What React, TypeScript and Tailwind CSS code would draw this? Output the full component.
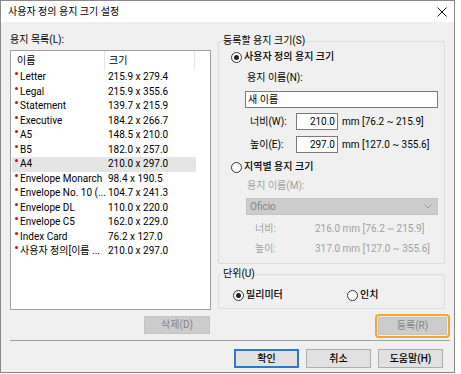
import React from "react"

type Paper = { name: string; size: string; selected?: boolean }

const papers: Paper[] = [
  { name: "Letter", size: "215.9 x 279.4" },
  { name: "Legal", size: "215.9 x 355.6" },
  { name: "Statement", size: "139.7 x 215.9" },
  { name: "Executive", size: "184.2 x 266.7" },
  { name: "A5", size: "148.5 x 210.0" },
  { name: "B5", size: "182.0 x 257.0" },
  { name: "A4", size: "210.0 x 297.0", selected: true },
  { name: "Envelope Monarch", size: "98.4 x 190.5" },
  { name: "Envelope No. 10 (...", size: "104.7 x 241.3" },
  { name: "Envelope DL", size: "110.0 x 220.0" },
  { name: "Envelope C5", size: "162.0 x 229.0" },
  { name: "Index Card", size: "76.2 x 127.0" },
  { name: "사용자 정의[이름 ...", size: "210.0 x 297.0" },
]

const Radio = ({ checked, label }: { checked?: boolean; label: string }) => (
  <div className="flex items-center h-[14px]">
    <span className="w-[11px] h-[11px] rounded-full border border-[#333] bg-white flex items-center justify-center">
      {checked && <span className="w-[5px] h-[5px] rounded-full bg-[#222]" />}
    </span>
    <span className="ml-[2px] font-medium">{label}</span>
  </div>
)

const GroupBox = ({
  title,
  className,
  children,
}: {
  title: string
  className?: string
  children: React.ReactNode
}) => (
  <div className={"relative border border-[#dcdcdc] rounded-[2px] " + (className ?? "")}>
    <span className="absolute -top-[8px] left-[3px] px-[1px] bg-[#f0f0f0] leading-[14px]">
      {title}
    </span>
    {children}
  </div>
)

export default function App() {
  return (
    <div className="w-[461px] h-[374px] bg-white font-['Roboto','Noto_Sans_CJK_KR',sans-serif] text-[10px] leading-[14px] text-black">
      <div className="w-[455px] h-[373px] border border-[#8a8a8a] bg-[#f0f0f0] flex flex-col">
        {/* title bar */}
        <div className="h-[21px] bg-white flex items-center justify-between pl-[7px] pr-[6px]">
          <span>사용자 정의 용지 크기 설정</span>
          <svg width="10" height="10" viewBox="0 0 10 10" className="mr-[1px]">
            <path d="M0.5 0.5 L9.5 9.5 M9.5 0.5 L0.5 9.5" stroke="#111" strokeWidth="1" />
          </svg>
        </div>

        <div className="pl-[9px] flex flex-col">
          <div className="flex items-start">
            {/* left column */}
            <div className="w-[201px] flex flex-col pt-[11px]">
              <span>용지 목록(L):</span>
              <div className="mt-[3px] h-[260px] border border-[#a0a0a0] bg-white">
                <div className="flex h-[19px] items-center">
                  <span className="w-[94px] pl-[6px] h-full flex items-center border-r border-[#e5e5e5]">
                    이름
                  </span>
                  <span className="w-[90px] pl-[4px] h-full flex items-center border-r border-[#e5e5e5]">
                    크기
                  </span>
                </div>
                <div className="flex flex-col pl-[1px]">
                  {papers.map((p) => (
                    <div
                      key={p.name}
                      className={
                        "flex items-start w-[184px] h-[14.5px] " + (p.selected ? "bg-[#e5e5e5]" : "")
                      }
                    >
                      <span className="w-[3px] h-[3px] rounded-full bg-[#cc1111] ml-[3px] mt-[2px] shrink-0" />
                      <span className="ml-[2px] w-[88px] whitespace-nowrap overflow-hidden leading-[14.5px]">
                        {p.name}
                      </span>
                      <span className="whitespace-nowrap leading-[14.5px]">{p.size}</span>
                    </div>
                  ))}
                </div>
              </div>
              <div className="flex justify-end mt-[6px] pr-[1px]">
                <button className="w-[66px] h-[18px] bg-[#cccccc] border border-[#c4c4c4] text-[#848484]">
                  삭제(D)
                </button>
              </div>
            </div>

            {/* right column */}
            <div className="ml-[7px] w-[229px] flex flex-col pt-[19px]">
              <GroupBox title="등록할 용지 크기(S)" className="w-[227px] pt-[8px] pb-[7px]">
                <div className="pl-[12px]">
                  <Radio checked label="사용자 정의 용지 크기" />
                </div>
                <div className="mt-[7px] pl-[28px]">용지 이름(N):</div>
                <div className="mt-[6px] ml-[26px] w-[193px] h-[17px] border border-[#7a7a7a] bg-white pl-[2px] flex items-center">
                  새 이름
                </div>
                <div className="mt-[5px] flex items-center h-[17px]">
                  <span className="ml-[31px] w-[46px]">너비(W):</span>
                  <span className="w-[42px] h-[17px] border border-[#7a7a7a] bg-white flex items-center justify-end pr-[2px]">
                    210.0
                  </span>
                  <span className="ml-[4px]">mm [76.2 ~ 215.9]</span>
                </div>
                <div className="mt-[6px] flex items-center h-[17px]">
                  <span className="ml-[31px] w-[46px]">높이(E):</span>
                  <span className="w-[42px] h-[17px] border border-[#7a7a7a] bg-white flex items-center justify-end pr-[2px]">
                    297.0
                  </span>
                  <span className="ml-[4px]">mm [127.0 ~ 355.6]</span>
                </div>
                <div className="mt-[7px] pl-[12px]">
                  <Radio label="지역별 용지 크기" />
                </div>
                <div className="mt-[5px] pl-[28px] text-[#a0a0a0]">용지 이름(M):</div>
                <div className="mt-[5px] ml-[27px] w-[192px] h-[17px] bg-[#cccccc] border border-[#c4c4c4] pl-[3px] pr-[5px] flex items-center justify-between text-[#848484]">
                  <span>Oficio</span>
                  <svg width="8" height="5" viewBox="0 0 8 5">
                    <path d="M0.5 0.5 L4 4 L7.5 0.5" fill="none" stroke="#9a9a9a" strokeWidth="1" />
                  </svg>
                </div>
                <div className="mt-[7px] flex text-[#a0a0a0]">
                  <span className="ml-[36px] w-[60px]">너비:</span>
                  <span>216.0 mm [76.2 ~ 215.9]</span>
                </div>
                <div className="mt-[6px] flex text-[#a0a0a0]">
                  <span className="ml-[36px] w-[60px]">높이:</span>
                  <span>317.0 mm [127.0 ~ 355.6]</span>
                </div>
              </GroupBox>

              <GroupBox title="단위(U)" className="w-[227px] mt-[10px] pt-[13px] pb-[6px]">
                <div className="flex">
                  <div className="ml-[14px] w-[114px]">
                    <Radio checked label="밀리미터" />
                  </div>
                  <Radio label="인치" />
                </div>
              </GroupBox>

              <div className="flex justify-end mt-[8px]">
                <button className="relative w-[69px] h-[18px] bg-[#cccccc] border border-[#c4c4c4] text-[#848484]">
                  등록(R)
                  <span className="absolute -inset-[4px] border-2 border-[#f3a833] rounded-[4px]" />
                </button>
              </div>
            </div>
          </div>

          <div className="mt-[5px] w-[440px] h-px bg-[#a0a0a0]" />

          <div className="mt-[8px] flex justify-end gap-[7px] pr-[11px]">
            <button className="w-[65px] h-[19px] border-2 border-[#2f77c8] bg-[#e1e1e1] font-medium">
              확인
            </button>
            <button className="w-[65px] h-[19px] border border-[#adadad] bg-[#e1e1e1] font-medium">
              취소
            </button>
            <button className="w-[65px] h-[19px] border border-[#adadad] bg-[#e1e1e1] font-medium">
              도움말(H)
            </button>
          </div>
        </div>
      </div>
    </div>
  )
}
